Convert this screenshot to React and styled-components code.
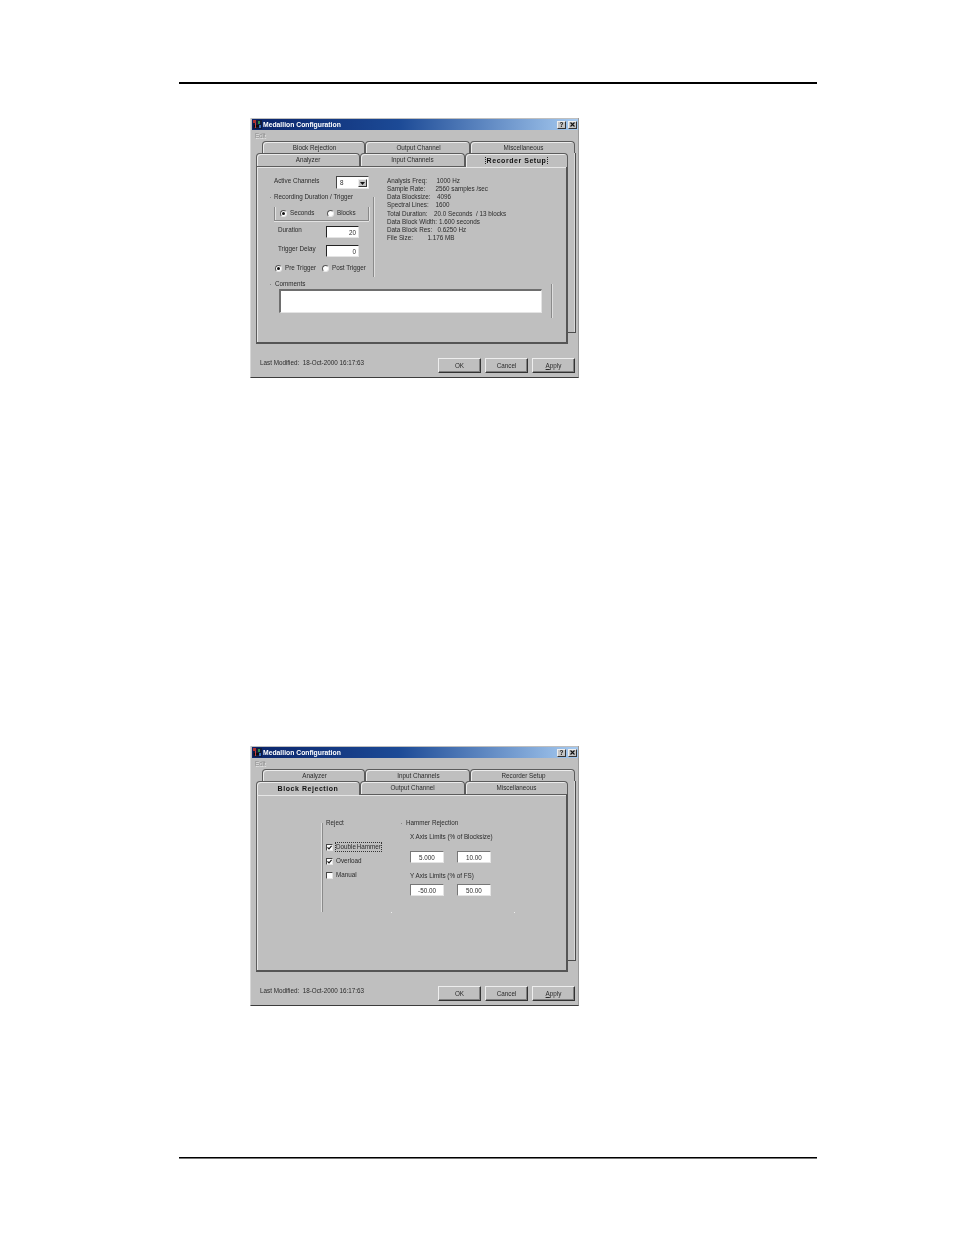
import styled, { createGlobalStyle } from "styled-components";

const GlobalStyle = createGlobalStyle`
  html, body { margin: 0; padding: 0; background: #fff; }
  * { box-sizing: border-box; }
`;

const Page = styled.div`
  width: 954px;
  height: 1235px;
  padding-top: 82px;
  display: flex;
  flex-direction: column;
  background: #fff;
  font-family: "Liberation Sans", Arial, sans-serif;
  overflow: hidden;
`;

const Rule = styled.div`
  width: 638px;
  height: ${(p) => p.$thick}px;
  margin: ${(p) => p.$top}px 0 0 179px;
  background: #000;
  flex: none;
`;

const FootRule = styled(Rule)`
  box-shadow: 0 1px 0 #777;
`;

const Dialog = styled.div`
  width: 329px;
  height: 260px;
  margin: ${(p) => p.$top}px 0 0 250px;
  padding: 1px 0 0 1px;
  display: flex;
  flex-direction: column;
  flex: none;
  background: #bfbfbf;
  border-left: 1px solid #d8d8d8;
  border-right: 1px solid #9a9a9a;
  border-bottom: 1px solid #3c3c3c;
  color: #2b2b2b;
  font-size: 6.3px;
  line-height: 8px;
  filter: blur(0.35px);
`;

const TitleBar = styled.div`
  height: 11px;
  flex: none;
  padding: 0 1px;
  display: flex;
  align-items: center;
  background: linear-gradient(90deg, #0a246a 0%, #1c4a96 45%, #a6caf0 100%);
  color: #fff;
  font-weight: 700;
  font-size: 6.8px;
`;

const TitleText = styled.span`
  margin-left: 1px;
  flex: 1;
`;

const CaptionButton = styled.div`
  width: 9px;
  height: 8px;
  margin-left: ${(p) => p.$gap}px;
  display: flex;
  align-items: center;
  justify-content: center;
  background: #c4c4c4;
  border-top: 1px solid #eee;
  border-left: 1px solid #eee;
  border-right: 1px solid #333;
  border-bottom: 1px solid #333;
  color: #111;
  font-weight: 700;
  font-size: 6.5px;
`;

const MenuBar = styled.div`
  height: 11px;
  flex: none;
  padding: 2px 0 0 3px;
  color: #8b8b8b;
  text-shadow: 0.5px 0.5px 0 #e8e8e8;
`;

const TabStack = styled.div`
  position: relative;
  margin-left: 4px;
  width: 320px;
  flex: none;
  &::after {
    content: "";
    position: absolute;
    left: 312px;
    top: 12px;
    width: 7px;
    height: 179px;
    border-right: 1px solid #4c4c4c;
    border-bottom: 1px solid #4c4c4c;
    box-shadow: inset -1px 0 0 #d8d8d8;
  }
`;

const TabRow = styled.div`
  display: flex;
  height: ${(p) => p.$height}px;
  margin-left: ${(p) => p.$indent}px;
  position: relative;
  z-index: ${(p) => p.$layer};
`;

const Tab = styled.div`
  width: ${(p) => p.$width}px;
  height: ${(p) => (p.$active ? p.$rowHeight + 1 : p.$rowHeight)}px;
  flex: none;
  display: flex;
  align-items: center;
  justify-content: center;
  padding: ${(p) => (p.$back ? "0 0 0 2px" : "0 0 1px 0")};
  background: #bfbfbf;
  border: 1px solid #5c5c5c;
  border-bottom: 0;
  border-radius: 4px 4px 0 0;
  box-shadow: inset 1px 1px 0 #ececec;
  font-weight: ${(p) => (p.$active ? 700 : 400)};
  font-size: ${(p) => (p.$active ? 7 : 6.3)}px;
  letter-spacing: ${(p) => (p.$active ? 0.55 : 0)}px;
  color: ${(p) => (p.$active ? "#111" : "#2b2b2b")};
  position: relative;
  z-index: ${(p) => (p.$active ? 2 : 0)};
`;

const TabFocus = styled.span`
  padding: 0 0.5px;
  line-height: 7px;
  border-left: ${(p) => (p.$focus ? "1px dotted #222" : "0")};
  border-right: ${(p) => (p.$focus ? "1px dotted #222" : "0")};
`;

const TabPanel = styled.div`
  width: 312px;
  height: 178px;
  background: #bfbfbf;
  border: 1px solid #5c5c5c;
  border-bottom: 2px solid #555;
  border-right: 2px solid #555;
  box-shadow: inset 1px 1px 0 #e6e6e6;
  position: relative;
  z-index: 1;
`;

const Speck = styled.i`
  position: absolute;
  left: ${(p) => p.$x}px;
  top: ${(p) => p.$y}px;
  width: 1px;
  height: 1px;
  background: ${(p) => p.$color};
`;

const PanelRow = styled.div`
  display: flex;
  padding-left: ${(p) => p.$left}px;
  padding-top: ${(p) => p.$topPad}px;
`;

const LeftColumn = styled.div`
  width: 100px;
  flex: none;
`;

const ActiveRow = styled.div`
  display: flex;
  height: 13px;
`;

const ActiveLabel = styled.span`
  width: 62px;
  margin-top: 1px;
`;

const SelectBox = styled.div`
  width: 33px;
  height: 13px;
  padding: 2px 1px 0 3px;
  display: flex;
  justify-content: space-between;
  background: #fff;
  border-top: 1px solid #444;
  border-left: 1px solid #444;
  border-right: 1px solid #e4e4e4;
  border-bottom: 1px solid #e4e4e4;
`;

const SelectArrow = styled.div`
  width: 9px;
  height: 8px;
  display: flex;
  align-items: center;
  justify-content: center;
  background: #c4c4c4;
  border-top: 1px solid #eee;
  border-left: 1px solid #eee;
  border-right: 1px solid #333;
  border-bottom: 1px solid #333;
`;

const DurationSection = styled.div`
  display: flow-root;
  margin-top: 8px;
  height: 80px;
  border-right: 1px solid #8a8a8a;
  box-shadow: 1px 0 0 #dedede;
`;

const Heading = styled.div`
  margin: -4px 0 0 0;
  height: 8px;
  white-space: nowrap;
`;

const RadioGroup = styled.div`
  width: 95px;
  height: 14px;
  margin-top: 6px;
  padding: 0 0 1px 5px;
  display: flex;
  align-items: center;
  border-left: 1px solid #888;
  border-right: 1px solid #888;
  border-bottom: 1px solid #888;
  box-shadow: 0 1px 0 #e2e2e2, 1px 0 0 #e2e2e2, inset 1px 0 0 #e2e2e2;
`;

const RadioOption = styled.div`
  display: flex;
  align-items: center;
  gap: 3px;
  width: ${(p) => p.$width}px;
  flex: none;
  white-space: nowrap;
`;

const Radio = styled.span`
  width: 7px;
  height: 7px;
  flex: none;
  display: flex;
  align-items: center;
  justify-content: center;
  border-radius: 50%;
  background: #fff;
  border-top: 1px solid #555;
  border-left: 1px solid #555;
  border-right: 1px solid #e8e8e8;
  border-bottom: 1px solid #e8e8e8;
  &::after {
    content: "";
    width: 3px;
    height: 3px;
    border-radius: 50%;
    background: ${(p) => (p.$on ? "#111" : "transparent")};
  }
`;

const FieldRow = styled.div`
  display: flex;
  height: 12px;
  margin-top: ${(p) => p.$top}px;
  padding-left: 4px;
`;

const FieldLabel = styled.span`
  width: 48px;
`;

const NumberBox = styled.div`
  width: ${(p) => p.$width}px;
  height: 12px;
  flex: none;
  padding: 2px ${(p) => (p.$soft ? 0 : 2)}px 0 0;
  text-align: ${(p) => (p.$soft ? "center" : "right")};
  background: #fff;
  border-top: 1px solid ${(p) => (p.$soft ? "#777" : "#222")};
  border-left: 1px solid ${(p) => (p.$soft ? "#777" : "#222")};
  border-right: 1px solid #e4e4e4;
  border-bottom: 1px solid #e4e4e4;
`;

const TriggerRow = styled.div`
  display: flex;
  align-items: center;
  height: 12px;
  margin-top: 5px;
  padding-left: 1px;
`;

const InfoList = styled.div`
  margin: 1px 0 0 13px;
`;

const InfoRow = styled.div`
  display: flex;
  height: 8.15px;
`;

const InfoLabel = styled.span`
  width: ${(p) => p.$width}px;
  flex: none;
  white-space: nowrap;
`;

const InfoValue = styled.span`
  white-space: pre;
`;

const CommentBlock = styled.div`
  display: flow-root;
  width: 277px;
  height: 34px;
  margin: 7px 0 0 18px;
  border-right: 1px solid #8a8a8a;
  box-shadow: 1px 0 0 #dedede;
`;

const CommentBox = styled.div`
  width: 263px;
  height: 24px;
  margin: 1px 0 0 4px;
  background: #fff;
  border-top: 2px solid #6e6e6e;
  border-left: 2px solid #6e6e6e;
  border-right: 1px solid #e4e4e4;
  border-bottom: 1px solid #e4e4e4;
`;

const RejectColumn = styled.div`
  width: 84px;
  height: 89px;
  flex: none;
  padding-left: 3px;
  border-left: 1px solid #8a8a8a;
  box-shadow: -1px 0 0 #dedede;
`;

const CheckList = styled.div`
  margin-top: 15px;
  display: flex;
  flex-direction: column;
  gap: 4px;
`;

const CheckRow = styled.div`
  display: flex;
  align-items: center;
  height: 10px;
  gap: 3px;
`;

const CheckBox = styled.span`
  width: 7px;
  height: 7px;
  flex: none;
  display: flex;
  background: #fff;
  border-top: 1px solid #444;
  border-left: 1px solid #444;
  border-right: 1px solid #e4e4e4;
  border-bottom: 1px solid #e4e4e4;
`;

const CheckLabel = styled.span`
  height: 10px;
  padding: 0 1px;
  line-height: 9px;
  margin-left: -1px;
  white-space: nowrap;
  word-spacing: -1px;
  outline: ${(p) => (p.$focus ? "1px dotted #333" : "none")};
  outline-offset: -1px;
`;

const HammerColumn = styled.div`
  flex: none;
`;

const LimitLabel = styled.div`
  margin: ${(p) => p.$top}px 0 0 4px;
  height: 8px;
`;

const LimitInputs = styled.div`
  display: flex;
  gap: 13px;
  margin: ${(p) => p.$top}px 0 0 4px;
`;

const Footer = styled.div`
  display: flex;
  padding-right: 3px;
`;

const LastModified = styled.div`
  margin: 15px 0 0 8px;
  flex: 1;
  white-space: pre;
`;

const ButtonRow = styled.div`
  display: flex;
  gap: 4px;
  margin-top: 14px;
`;

const PushButton = styled.div`
  width: 43px;
  height: 15px;
  display: flex;
  align-items: center;
  justify-content: center;
  background: #bfbfbf;
  border-top: 1px solid #eee;
  border-left: 1px solid #eee;
  border-right: 1px solid #333;
  border-bottom: 1px solid #333;
  box-shadow: inset -1px -1px 0 #808080;
`;

const infoRows = [
  ["Analysis Freq:", "1000 Hz", 49.5],
  ["Sample Rate:", "2560 samples /sec", 48.5],
  ["Data Blocksize:", "4096", 50],
  ["Spectral Lines:", "1600", 48.5],
  ["Total Duration:", "20.0 Seconds  / 13 blocks", 47],
  ["Data Block Width:", "1.600 seconds", 52],
  ["Data Block Res:", "0.6250 Hz", 50.5],
  ["File Size:", "1.176 MB", 40.5],
];

const AppIcon = () => (
  <svg width="9" height="9" viewBox="0 0 9 9">
    <rect width="9" height="9" fill="#101a3c" />
    <rect x="0" y="0" width="3" height="3" fill="#b03030" />
    <rect x="5" y="1" width="2" height="3" fill="#2f8a4a" />
    <rect x="1" y="5" width="7" height="2" fill="#0b0b0b" />
    <rect x="2" y="3" width="1" height="5" fill="#c84040" />
    <rect x="6" y="5" width="2" height="3" fill="#3a6ec0" />
  </svg>
);

const CloseGlyph = () => (
  <svg width="5" height="5" viewBox="0 0 5 5">
    <path d="M0.5 0.5L4.5 4.5M4.5 0.5L0.5 4.5" stroke="#111" strokeWidth="1.1" />
  </svg>
);

const ArrowGlyph = () => (
  <svg width="5" height="3" viewBox="0 0 5 3">
    <path d="M0 0H5L2.5 3Z" fill="#111" />
  </svg>
);

const CheckGlyph = () => (
  <svg width="5" height="5" viewBox="0 0 5 5">
    <path d="M0.5 2.3L2 3.9L4.6 0.8" fill="none" stroke="#111" strokeWidth="1.1" />
  </svg>
);

const ConfigDialog = ({ top, backTabs, frontTabs, activeIndex, focusTab, children }) => (
  <Dialog $top={top}>
    <TitleBar>
      <AppIcon />
      <TitleText>Medallion Configuration</TitleText>
      <CaptionButton $gap={0}>?</CaptionButton>
      <CaptionButton $gap={2}>
        <CloseGlyph />
      </CaptionButton>
    </TitleBar>
    <MenuBar>Edit</MenuBar>
    <TabStack>
      <TabRow $height={12} $indent={6} $layer={0}>
        {backTabs.map(([label, width]) => (
          <Tab key={label} $width={width} $rowHeight={12} $back>
            {label}
          </Tab>
        ))}
      </TabRow>
      <TabRow $height={13} $indent={0} $layer={2}>
        {frontTabs.map(([label, width], i) => (
          <Tab key={label} $width={width} $rowHeight={13} $active={i === activeIndex}>
            <TabFocus $focus={focusTab && i === activeIndex}>{label}</TabFocus>
          </Tab>
        ))}
      </TabRow>
      <TabPanel>{children}</TabPanel>
    </TabStack>
    <Footer>
      <LastModified>Last Modified:  18-Oct-2000 16:17:63</LastModified>
      <ButtonRow>
        <PushButton>OK</PushButton>
        <PushButton>Cancel</PushButton>
        <PushButton>
          <span>
            <u>A</u>pply
          </span>
        </PushButton>
      </ButtonRow>
    </Footer>
  </Dialog>
);

const RecorderSetup = () => (
  <>
    <PanelRow $left={17} $topPad={9}>
      <LeftColumn>
        <ActiveRow>
          <ActiveLabel>Active Channels</ActiveLabel>
          <SelectBox>
            8
            <SelectArrow>
              <ArrowGlyph />
            </SelectArrow>
          </SelectBox>
        </ActiveRow>
        <DurationSection>
          <Heading>Recording Duration / Trigger</Heading>
          <RadioGroup>
            <RadioOption $width={47}>
              <Radio $on />
              Seconds
            </RadioOption>
            <RadioOption $width={36}>
              <Radio />
              Blocks
            </RadioOption>
          </RadioGroup>
          <FieldRow $top={5}>
            <FieldLabel>Duration</FieldLabel>
            <NumberBox $width={33}>20</NumberBox>
          </FieldRow>
          <FieldRow $top={7}>
            <FieldLabel>Trigger Delay</FieldLabel>
            <NumberBox $width={33}>0</NumberBox>
          </FieldRow>
          <TriggerRow>
            <RadioOption $width={47}>
              <Radio $on />
              Pre Trigger
            </RadioOption>
            <RadioOption $width={44}>
              <Radio />
              Post Trigger
            </RadioOption>
          </TriggerRow>
        </DurationSection>
      </LeftColumn>
      <InfoList>
        {infoRows.map(([label, value, width]) => (
          <InfoRow key={label}>
            <InfoLabel $width={width}>{label}</InfoLabel>
            <InfoValue>{value}</InfoValue>
          </InfoRow>
        ))}
      </InfoList>
    </PanelRow>
    <CommentBlock>
      <Heading>Comments</Heading>
      <CommentBox />
    </CommentBlock>
    <Speck $x={13} $y={30} $color="#888" />
    <Speck $x={13} $y={117} $color="#888" />
  </>
);

const BlockRejection = () => (
  <>
    <PanelRow $left={65} $topPad={28}>
      <RejectColumn>
        <Heading>Reject</Heading>
        <CheckList>
          <CheckRow>
            <CheckBox>
              <CheckGlyph />
            </CheckBox>
            <CheckLabel $focus>Double Hammer</CheckLabel>
          </CheckRow>
          <CheckRow>
            <CheckBox>
              <CheckGlyph />
            </CheckBox>
            <CheckLabel>Overload</CheckLabel>
          </CheckRow>
          <CheckRow>
            <CheckBox />
            <CheckLabel>Manual</CheckLabel>
          </CheckRow>
        </CheckList>
      </RejectColumn>
      <HammerColumn>
        <Heading>Hammer Rejection</Heading>
        <LimitLabel $top={6}>X Axis Limits (% of Blocksize)</LimitLabel>
        <LimitInputs $top={10}>
          <NumberBox $width={34} $soft>5.000</NumberBox>
          <NumberBox $width={34} $soft>10.00</NumberBox>
        </LimitInputs>
        <LimitLabel $top={9}>Y Axis Limits (% of FS)</LimitLabel>
        <LimitInputs $top={4}>
          <NumberBox $width={34} $soft>-50.00</NumberBox>
          <NumberBox $width={34} $soft>50.00</NumberBox>
        </LimitInputs>
      </HammerColumn>
    </PanelRow>
    <Speck $x={144} $y={28} $color="#888" />
    <Speck $x={134} $y={117} $color="#eee" />
    <Speck $x={257} $y={117} $color="#eee" />
  </>
);

export default function App() {
  return (
    <Page>
      <GlobalStyle />
      <Rule $thick={2} $top={0} />
      <ConfigDialog
        top={34}
        backTabs={[["Block Rejection", 103], ["Output Channel", 105], ["Miscellaneous", 105]]}
        frontTabs={[["Analyzer", 104], ["Input Channels", 105], ["Recorder Setup", 103]]}
        activeIndex={2}
        focusTab
      >
        <RecorderSetup />
      </ConfigDialog>
      <ConfigDialog
        top={368}
        backTabs={[["Analyzer", 103], ["Input Channels", 105], ["Recorder Setup", 105]]}
        frontTabs={[["Block Rejection", 104], ["Output Channel", 105], ["Miscellaneous", 103]]}
        activeIndex={0}
      >
        <BlockRejection />
      </ConfigDialog>
      <FootRule $thick={1} $top={151} />
    </Page>
  );
}
